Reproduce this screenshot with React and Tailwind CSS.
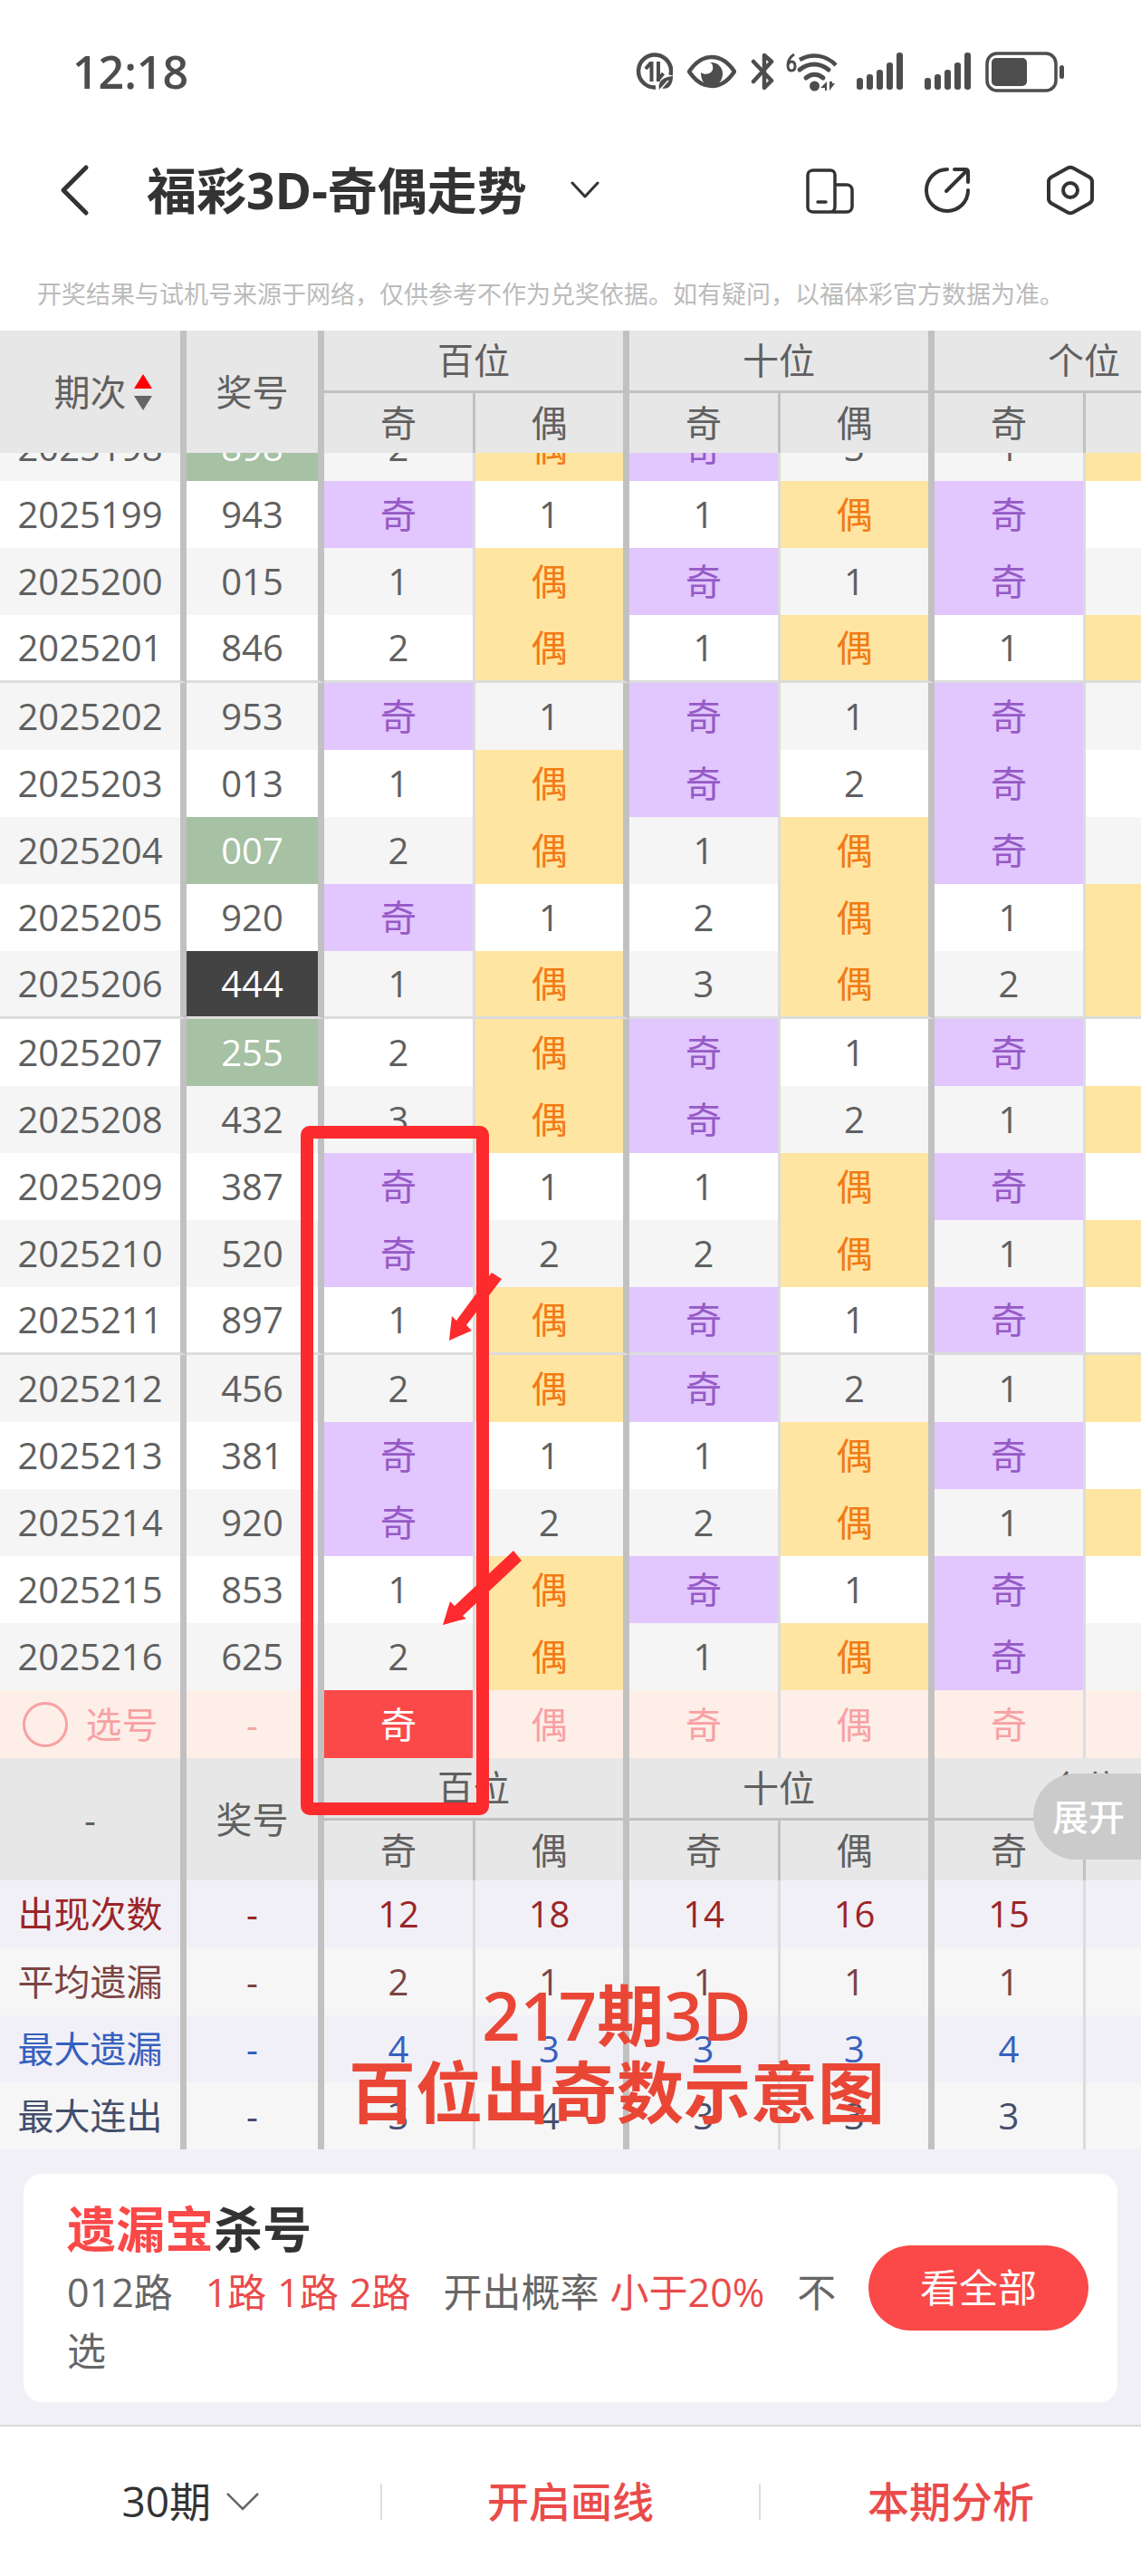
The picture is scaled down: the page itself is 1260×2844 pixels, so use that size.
import { useState } from 'react';
import clsx from 'clsx';

const POSITIONS = ['百位', '十位', '个位'];

const DRAWS = [
  ['2025199', '943'],
  ['2025200', '015'],
  ['2025201', '846'],
  ['2025202', '953'],
  ['2025203', '013'],
  ['2025204', '007'],
  ['2025205', '920'],
  ['2025206', '444'],
  ['2025207', '255'],
  ['2025208', '432'],
  ['2025209', '387'],
  ['2025210', '520'],
  ['2025211', '897'],
  ['2025212', '456'],
  ['2025213', '381'],
  ['2025214', '920'],
  ['2025215', '853'],
  ['2025216', '625'],
];

// first visible row, already half scrolled under the header
const FIRST = { issue: '2025198', code: '898', miss: [2, 0, 0, 3, 1, 0] };

const STATS = [
  { label: '出现次数', values: [12, 18, 14, 16, 15, 15], cls: 'bg-[#f1f0f6] text-[#9b2528]', h: 'h-[74px]' },
  { label: '平均遗漏', values: [2, 1, 1, 1, 1, 1], cls: 'bg-[#f6f6f6] text-[#7b4444]', h: 'h-[75px]' },
  { label: '最大遗漏', values: [4, 3, 3, 3, 4, 3], cls: 'bg-[#f1f0f6] text-[#3660bf]', h: 'h-[74px]' },
  { label: '最大连出', values: [3, 4, 3, 3, 3, 4], cls: 'bg-[#f6f6f6] text-[#444f6b]', h: 'h-[74px]' },
];

// miss[i] === 0 means the cell was hit; even index = 奇, odd index = 偶
function buildRows() {
  const rows = [FIRST];
  for (const [issue, code] of DRAWS) {
    const prev = rows[rows.length - 1].miss;
    const miss = prev.map((m, i) => {
      const odd = Number(code[Math.floor(i / 2)]) % 2 === 1;
      const hit = i % 2 === 0 ? odd : !odd;
      return hit ? 0 : m + 1;
    });
    rows.push({ issue, code, miss });
  }
  return rows;
}

const ROWS = buildRows();

const codeStyle = (code) => {
  const kinds = new Set(code).size;
  if (kinds === 1) return 'bg-[#434343] text-white';
  if (kinds === 2) return 'bg-[#a6c1a3] text-white';
  return '';
};

const sideBorder = (i) => (i % 2 === 0 ? 'border-r-3 border-r-[#dcdcdc]' : 'border-r-7 border-r-[#c1c1c1]');

function StatusBar() {
  return (
    <div className="flex h-[158px] items-center justify-between pr-[84px] pl-20 text-[#4d4d4d]">
      <span className="text-[50px] font-semibold">12:18</span>
      <div className="flex items-center">
        <svg className="mr-4" width="41" height="42" viewBox="0 0 41 42" fill="none" stroke="currentColor">
          <path d="M22 38.5A18 18 0 1 1 38.5 25" strokeWidth="4.5" />
          <path d="M17.5 10v22M17 11l-6 7M25 32V10M24 31l6.5-8" strokeWidth="4" />
          <path d="M26 41c-2-9 4-14 15-15 0 11-6 16-13 13z" fill="currentColor" stroke="none" />
          <path d="M27 41l9-10" stroke="#fff" strokeWidth="1.5" />
        </svg>
        <svg className="mr-4" width="54" height="38" viewBox="0 0 54 38" fill="none">
          <path d="M2 19C10 7 18 3 27 3s17 4 25 16C44 31 36 35 27 35S10 31 2 19z" stroke="currentColor" strokeWidth="4.5" strokeLinejoin="round" />
          <path d="M25 9c8-1 14 5 14 12 0 8-5 14-12 14S15 30 15 20c5 4 15 1 13-7 0-2-1-3-3-4z" fill="currentColor" />
        </svg>
        <svg className="mr-3" width="27" height="42" viewBox="0 0 27 42" fill="none" stroke="currentColor" strokeWidth="4.5" strokeLinecap="round" strokeLinejoin="round">
          <path d="M3 10l20 21-8 8V3l8 7L3 32" />
        </svg>
        <svg className="mr-5" width="58" height="43" viewBox="0 0 58 43" fill="none" stroke="currentColor">
          <path d="M9 2C4 5 2 10 2 14c0 4 1 6 4 6s4-2 4-5-1-5-4-5-3 2-4 4" strokeWidth="3" />
          <path d="M15 8c14-8 30-5 40 6" strokeWidth="4.5" strokeLinecap="butt" />
          <path d="M15 19c10-8 22-8 32 0M22 28c6-5 13-5 19 0" strokeWidth="5" strokeLinecap="round" />
          <circle cx="31.500" cy="37" r="5.500" fill="currentColor" stroke="none" />
          <path d="M45 32v10h-2v-3h-5zM48 32v10l6-8h-3v-2z" fill="currentColor" stroke="none" />
        </svg>
        <div className="mr-4 flex gap-6">
          <SignalBars />
          <SignalBars />
        </div>
        <svg width="88" height="45" viewBox="0 0 88 45">
          <rect x="2" y="2" width="76" height="41" rx="11" fill="none" stroke="currentColor" strokeWidth="3.5" />
          <rect x="7" y="7" width="39" height="31" rx="5" fill="currentColor" />
          <rect x="82" y="15" width="5" height="15" rx="2.500" fill="currentColor" />
        </svg>
      </div>
    </div>
  );
}

function SignalBars() {
  return (
    <svg width="51" height="42" viewBox="0 0 51 42" fill="currentColor">
      <rect x="0" y="28" width="7" height="13" rx="3" />
      <rect x="11" y="24" width="7" height="17" rx="3" />
      <rect x="22" y="19" width="7" height="22" rx="3" />
      <rect x="33" y="11" width="7" height="30" rx="3" />
      <rect x="44" y="0" width="7" height="41" rx="3" />
    </svg>
  );
}

function NavBar() {
  return (
    <header className="flex h-[104px] items-center pr-[50px] pl-16 text-[#333]">
      <button type="button" aria-label="返回" className="mr-[62px]">
        <svg width="36" height="58" viewBox="0 0 36 58" fill="none" stroke="currentColor" strokeWidth="5" strokeLinecap="round" strokeLinejoin="round">
          <path d="M31 4L6 29l25 25" />
        </svg>
      </button>
      <button type="button" className="flex items-center gap-12">
        <h1 className="text-[55px] font-bold">福彩3D-奇偶走势</h1>
        <svg width="32" height="20" viewBox="0 0 32 20" fill="none" stroke="currentColor" strokeWidth="3" strokeLinecap="round" strokeLinejoin="round">
          <path d="M2 2l14 15L30 2" />
        </svg>
      </button>
      <div className="ml-auto flex items-center gap-[77px]">
        <button type="button" aria-label="切换">
          <svg width="56" height="56" viewBox="0 0 56 56" fill="none" stroke="currentColor" strokeWidth="3.5" strokeLinecap="round">
            <path d="M34 46V11c0-3-2-5-5-5H10C7 6 4 8 4 11v36c0 3 3 5 6 5h37c3 0 6-2 6-6V28c0-4-3-6-6-6H34M34 46c0 4-2 6-5 6" />
            <path d="M15 41h9" />
          </svg>
        </button>
        <button type="button" aria-label="分享">
          <svg width="56" height="56" viewBox="0 0 56 56" fill="none" stroke="currentColor" strokeWidth="4" strokeLinecap="round" strokeLinejoin="round">
            <path d="M25 5A23 23 0 1 0 48 28" />
            <path d="M24 29L47 6M33 5h12c2 0 3 1 3 3v11" />
          </svg>
        </button>
        <button type="button" aria-label="设置">
          <svg width="56" height="56" viewBox="0 0 56 56" fill="none" stroke="currentColor" strokeWidth="4" strokeLinejoin="round">
            <path d="M25 3.500q3-1.500 6 0l18 10q3 2 3 5v19q0 3-3 5l-18 10q-3 1.500-6 0l-18-10q-3-2-3-5v-19q0-3 3-5z" />
            <circle cx="28" cy="28" r="8" />
          </svg>
        </button>
      </div>
    </header>
  );
}

function HeadRows({ first }) {
  const th = 'border-r-7 border-[#c1c1c1] bg-[#e7e7e7] p-0 font-normal';
  return (
    <>
      <tr>
        <th rowSpan={2} className={th}>{first}</th>
        <th rowSpan={2} className={th}>奖号</th>
        {POSITIONS.map((p) => (
          <th key={p} colSpan={2} className={clsx(th, 'h-[69px] border-b-3')}>{p}</th>
        ))}
      </tr>
      <tr>
        {POSITIONS.flatMap((p) => [
          <th key={p + '奇'} className="h-[66px] border-r-3 border-[#c1c1c1] bg-[#e7e7e7] p-0 font-normal">奇</th>,
          <th key={p + '偶'} className={clsx(th, 'h-[66px]')}>偶</th>,
        ])}
      </tr>
    </>
  );
}

function DrawRow({ row, index }) {
  const clipped = index === 0;
  const groupEnd = index % 5 === 3 && index < 15;
  const base = clsx(
    'p-0',
    clipped ? 'h-[31px]' : groupEnd ? 'h-[75px] border-b-3 border-b-[#dcdcdc]' : 'h-[74px]'
  );
  const wrap = (text) =>
    clipped ? (
      <div className="flex h-[31px] items-end justify-center overflow-hidden">
        <span className="h-[74px] shrink-0 leading-[74px]">{text}</span>
      </div>
    ) : (
      text
    );

  return (
    <tr className={index % 2 === 0 ? 'bg-[#f5f5f5]' : 'bg-white'}>
      <td className={clsx(base, 'border-r-7 border-r-[#c1c1c1]')}>{wrap(row.issue)}</td>
      <td className={clsx(base, 'border-r-7 border-r-[#c1c1c1]', codeStyle(row.code))}>{wrap(row.code)}</td>
      {row.miss.map((m, i) => (
        <td
          key={i}
          className={clsx(
            base,
            sideBorder(i),
            m === 0 && (i % 2 === 0 ? 'bg-[#e2c6fe] text-[#965ac6]' : 'bg-[#fee5a1] text-[#f27a15]')
          )}
        >
          {wrap(m === 0 ? (i % 2 === 0 ? '奇' : '偶') : m)}
        </td>
      ))}
    </tr>
  );
}

function PickRow() {
  const [picked, setPicked] = useState([0]);
  const toggle = (i) =>
    setPicked((cur) => (cur.includes(i) ? cur.filter((x) => x !== i) : [...cur, i]));

  return (
    <tr className="bg-[#feeee8] text-[#f8a1a3]">
      <td className="h-[75px] border-r-7 border-r-[#c1c1c1] p-0">
        <label className="flex items-center justify-center gap-5">
          <input type="radio" name="pick" className="size-[50px] appearance-none rounded-full border-3 border-[#f8a1a3]" />
          选号
        </label>
      </td>
      <td className="border-r-7 border-r-[#c1c1c1] p-0">-</td>
      {[0, 1, 2, 3, 4, 5].map((i) => (
        <td key={i} className={clsx('p-0', sideBorder(i))}>
          <button
            type="button"
            onClick={() => toggle(i)}
            className={clsx('block h-[75px] w-full', picked.includes(i) && 'bg-[#fa4948] text-white')}
          >
            {i % 2 === 0 ? '奇' : '偶'}
          </button>
        </td>
      ))}
    </tr>
  );
}

function TrendTable() {
  return (
    <table className="w-[1369px] table-fixed border-separate border-spacing-0 text-center text-[40px] leading-[60px] text-[#606060]">
      <colgroup>
        <col className="w-[206px]" />
        <col className="w-[152px]" />
        <col className="w-[167px]" />
        <col className="w-[170px]" />
        <col className="w-[167px]" />
        <col className="w-[170px]" />
        <col className="w-[167px]" />
        <col className="w-[170px]" />
      </colgroup>
      <thead>
        <HeadRows
          first={
            <button type="button" className="relative">
              期次
              <svg className="absolute top-[10px] left-full ml-2" width="20" height="40" viewBox="0 0 20 40">
                <path d="M10 0l10 16H0z" fill="#fe0000" />
                <path d="M0 24h20L10 40z" fill="#666" />
              </svg>
            </button>
          }
        />
      </thead>
      <tbody>
        {ROWS.map((row, i) => (
          <DrawRow key={row.issue} row={row} index={i} />
        ))}
        <PickRow />
      </tbody>
      <tbody>
        <HeadRows first="-" />
        {STATS.map((s) => (
          <tr key={s.label} className={s.cls}>
            <td className={clsx('border-r-7 border-r-[#c1c1c1] p-0', s.h)}>{s.label}</td>
            <td className="border-r-7 border-r-[#c1c1c1] p-0">-</td>
            {s.values.map((v, i) => (
              <td key={i} className={clsx('p-0', sideBorder(i))}>{v}</td>
            ))}
          </tr>
        ))}
      </tbody>
    </table>
  );
}

// hand-drawn marks laid over the table
function Marks() {
  return (
    <>
      <svg className="pointer-events-none absolute top-[878px] left-[332px]" width="250" height="762" viewBox="332 1242 250 762">
        <rect x="339" y="1249" width="194" height="747" rx="3" fill="none" stroke="#fd2b2d" strokeWidth="14" />
        <path d="M496 1479l3-27 5 5 39-53 11 7-39 51 6 6z" fill="#fd2b2d" />
        <path d="M489 1793l8-26 5 5 65-61 9 11-65 61 4 3z" fill="#fd2b2d" />
      </svg>
      <p className="pointer-events-none absolute top-[1817px] left-[381px] w-[600px] text-center text-[74px] leading-[85px] font-semibold whitespace-nowrap text-[#e94636]">
        217期3D
        <br />
        百位出奇数示意图
      </p>
      <button
        type="button"
        className="absolute top-[1593px] right-0 h-[95px] rounded-l-full bg-[#cbcbcb] pr-[18px] pl-[21px] text-[40px] font-medium text-white"
      >
        展开
      </button>
    </>
  );
}

function KillCard() {
  return (
    <div className="bg-[#f1f0f6] px-[26px] pt-[27px] pb-[25px]">
      <section className="flex h-[252px] items-center justify-between rounded-[20px] bg-white pr-8 pl-12">
        <div className="w-[866px]">
          <h2 className="text-[54px] leading-[74px] font-bold text-[#333]">
            <span className="text-[#fa4948]">遗漏宝</span>杀号
          </h2>
          <p className="text-[43px] leading-[65px] text-[#666]">
            012路
            <span className="ml-9 text-[#e94b4b]">1路</span>
            <span className="ml-3 text-[#e94b4b]">1路</span>
            <span className="ml-3 text-[#e94b4b]">2路</span>
            <span className="ml-9">开出概率</span>
            <span className="ml-3 text-[#e94b4b]">小于20%</span>
            <span className="ml-9">不选</span>
          </p>
        </div>
        <button type="button" className="h-[94px] w-[243px] shrink-0 rounded-full bg-[#fa4948] text-[43px] text-white">
          看全部
        </button>
      </section>
    </div>
  );
}

function BottomBar() {
  return (
    <footer className="grid h-[167px] grid-cols-3 items-center border-t-2 border-[#dadada] bg-white text-center text-[46px] font-medium">
      <label className="flex items-center justify-center gap-4 text-[#333]">
        <select aria-label="期数" defaultValue="30" className="appearance-none bg-transparent font-normal">
          <option value="30">30期</option>
          <option value="50">50期</option>
        </select>
        <svg width="36" height="22" viewBox="0 0 36 22" fill="none" stroke="#666" strokeWidth="2.500">
          <path d="M1 2l17 17L35 2" />
        </svg>
      </label>
      <div className="flex h-10 items-center justify-center border-x-2 border-[#dedede]">
        <button type="button" className="text-[#ea4b4a]">开启画线</button>
      </div>
      <button type="button" className="text-[#ea4b4a]">本期分析</button>
    </footer>
  );
}

export default function App() {
  return (
    <main className="min-h-screen bg-white font-['Open_Sans','Noto_Sans_CJK_SC',sans-serif]">
      <StatusBar />
      <NavBar />
      <p className="flex h-[103px] items-center pt-6 pl-[41px] text-[27px] whitespace-nowrap text-[#bbb]">
        开奖结果与试机号来源于网络，仅供参考不作为兑奖依据。如有疑问，以福体彩官方数据为准。
      </p>
      <div className="relative">
        <div className="overflow-x-auto [scrollbar-width:none]">
          <TrendTable />
        </div>
        <Marks />
      </div>
      <KillCard />
      <BottomBar />
    </main>
  );
}
